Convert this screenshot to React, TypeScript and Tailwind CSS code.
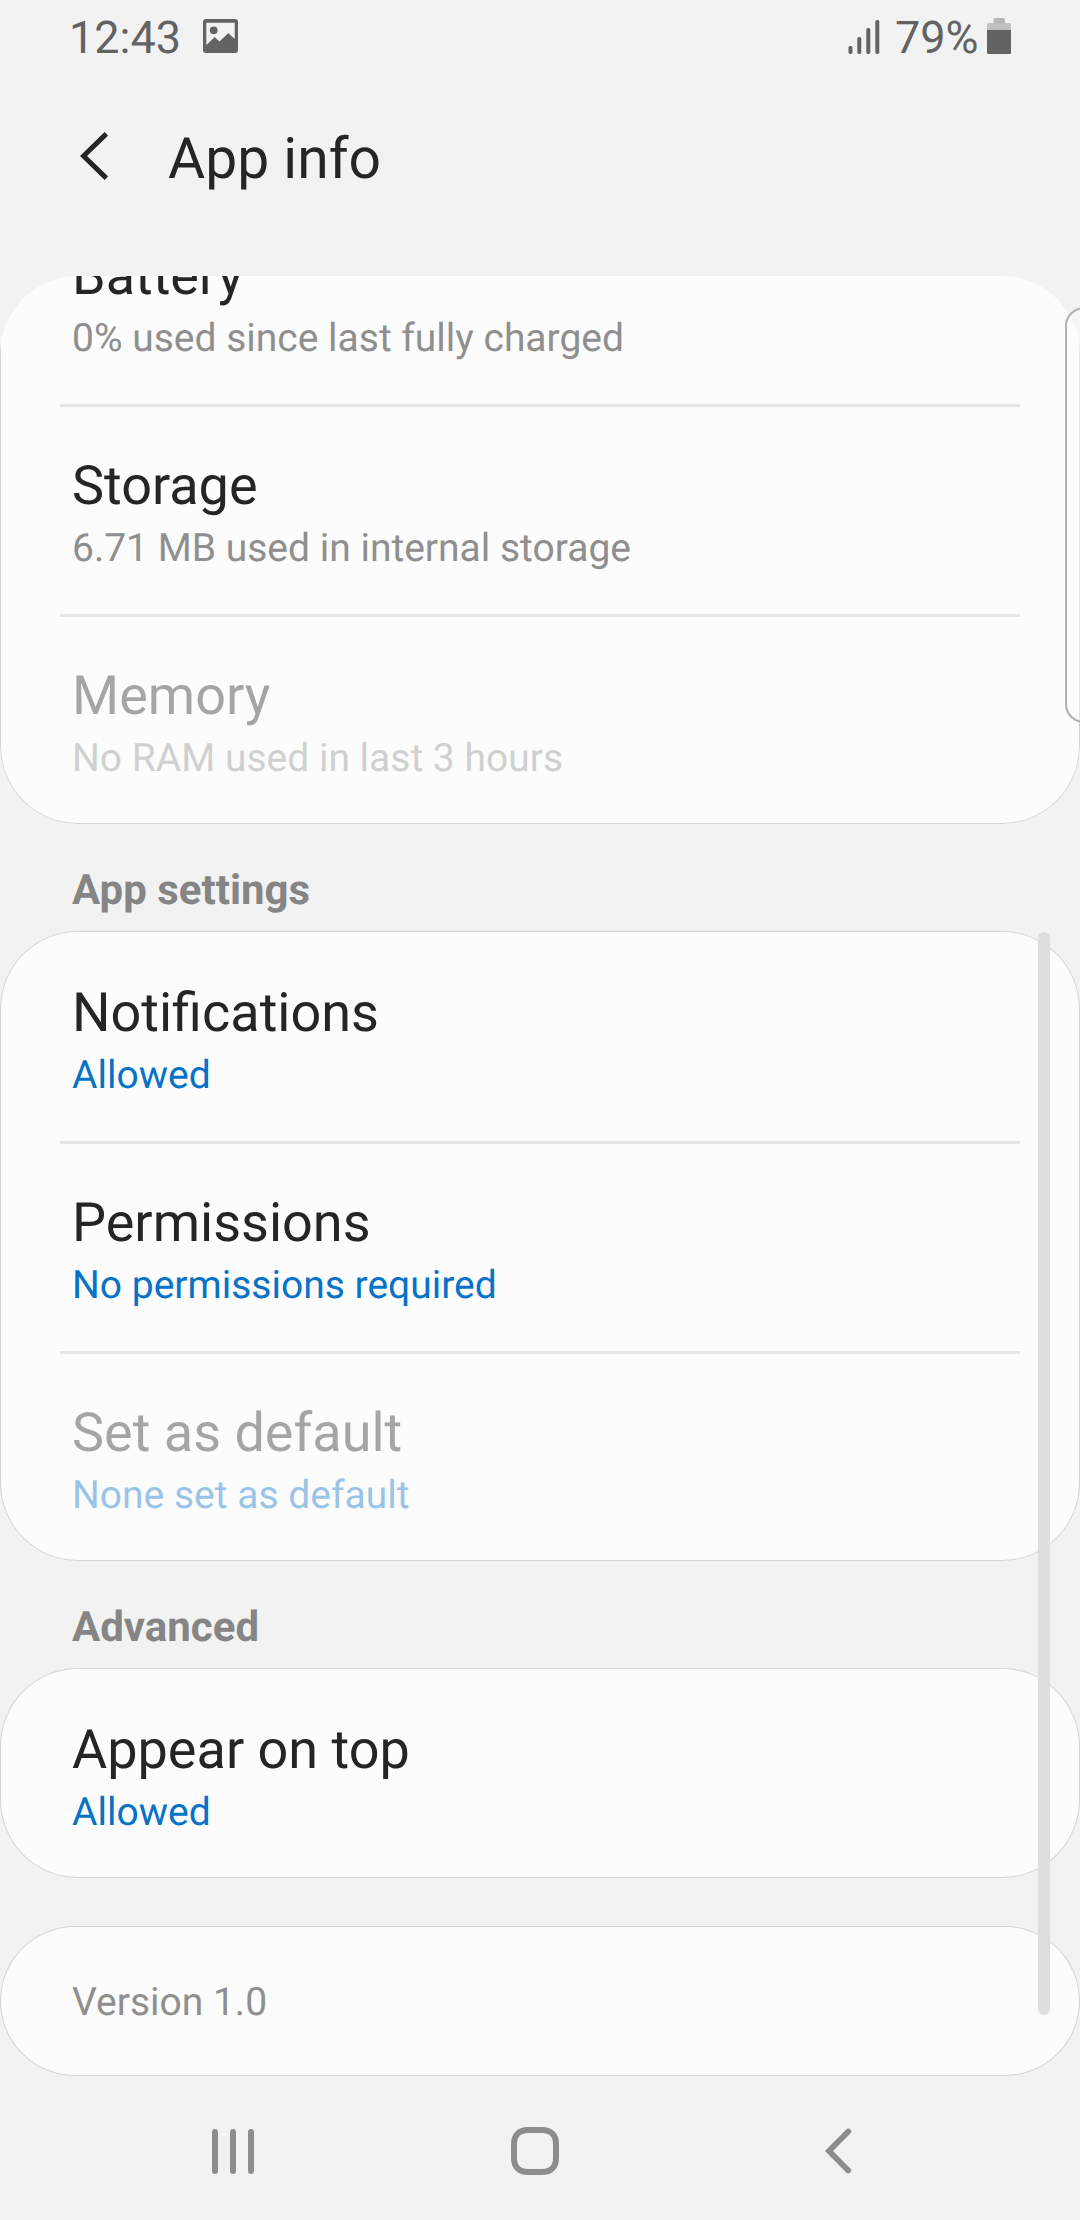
import type { ReactNode } from "react";

type RowProps = { title: string; summary: string; link?: boolean; disabled?: boolean; divided?: boolean };

function Row({ title, summary, link, disabled, divided }: RowProps) {
  const summaryColor = link ? "text-[#0672c8]" : "text-[#8f8f8f]";
  return (
    <div className="flex h-[210px] shrink-0 flex-col">
      <div className={`mx-[60px] h-[3px] shrink-0 ${divided ? "bg-[#e6e6e6]" : ""}`} />
      <div className={`flex flex-col px-[72px] pt-[48px] ${disabled ? "opacity-40" : ""}`}>
        <div className="h-[70px] text-[54px] leading-[63px] text-[#252525]">{title}</div>
        <div className={`h-[46px] text-[39px] leading-[46px] ${summaryColor}`}>{summary}</div>
      </div>
    </div>
  );
}

function Card({ className = "", children }: { className?: string; children: ReactNode }) {
  return (
    <section className={`flex w-full shrink-0 flex-col rounded-[78px] bg-[#fcfcfc] shadow-[inset_0_0_0_1px_#d4d4d4] ${className}`}>
      {children}
    </section>
  );
}

function SectionLabel({ children }: { children: ReactNode }) {
  return (
    <h2 className="h-[107px] shrink-0 px-[72px] pt-[42px] text-[42px] font-bold leading-[49px] text-[#858585]">
      {children}
    </h2>
  );
}

export default function App() {
  return (
    <div className="relative flex h-[2220px] w-[1080px] flex-col overflow-hidden bg-[#f2f2f2] font-['Roboto',sans-serif] [text-rendering:geometricPrecision]">
      <header className="flex h-[72px] shrink-0 items-start pl-[69px] pr-[69px] text-[45px] text-[#636363]">
        <span className="w-[111px] pt-[11px] leading-[53px]">12:43</span>
        <svg className="ml-[23px] mt-[19px] h-[34px] w-[35px]" viewBox="0 0 35 34" fill="#636363">
          <path fillRule="evenodd" d="M3 0H32Q35 0 35 3V31Q35 34 32 34H3Q0 34 0 31V3Q0 0 3 0ZM3.300 3.700V26L11.700 18L16.500 22.500L25.300 14L31.700 20V3.700Z" />
          <circle cx="10.700" cy="11.300" r="3.900" />
        </svg>
        <svg className="ml-auto mt-[20px] h-[34px] w-[32px]" viewBox="0 0 32 34" fill="#636363">
          <rect x="0.500" y="26" width="4" height="8" rx="1.700" />
          <rect x="9.300" y="17" width="4" height="17" rx="1.700" />
          <rect x="18.300" y="8" width="4" height="26" rx="1.700" />
          <rect x="27.300" y="0" width="4" height="34" rx="1.700" />
        </svg>
        <span className="ml-[15px] w-[84px] pt-[11px] leading-[53px]">79%</span>
        <svg className="ml-[8px] mt-[18px] h-[36px] w-[24px]" viewBox="0 0 24 36">
          <path d="M6.500 5V1.500Q6.500 0 8 0H16.500Q18 0 18 1.500V5Z" fill="#b7b7b7" />
          <path d="M0 12V6.500Q0 5 1.500 5H22.500Q24 5 24 6.500V12Z" fill="#c1c1c1" />
          <path d="M0 12H24V34.500Q24 36 22.500 36H1.500Q0 36 0 34.500Z" fill="#636363" />
        </svg>
      </header>

      <div className="flex h-[204px] shrink-0 items-start pl-[80px]">
        <svg className="mt-[60px] h-[48px] w-[28px]" viewBox="0 0 28 48" fill="none" stroke="#252525" strokeWidth="5">
          <path d="M26.300 1.800L3.500 24L26.300 46.200" />
        </svg>
        <h1 className="ml-[60px] mt-[53px] text-[57px] leading-[67px] text-[#252525]">App info</h1>
      </div>

      <main className="flex h-[1800px] shrink-0 flex-col">
        <div className="flex h-[548px] shrink-0 flex-col justify-end overflow-hidden rounded-[78px]">
          <Card>
            <Row title="Battery" summary="0% used since last fully charged" />
            <Row title="Storage" summary="6.71 MB used in internal storage" divided />
            <Row title="Memory" summary="No RAM used in last 3 hours" disabled divided />
          </Card>
        </div>
        <SectionLabel>App settings</SectionLabel>
        <Card>
          <Row title="Notifications" summary="Allowed" link />
          <Row title="Permissions" summary="No permissions required" link divided />
          <Row title="Set as default" summary="None set as default" link disabled divided />
        </Card>
        <SectionLabel>Advanced</SectionLabel>
        <Card>
          <Row title="Appear on top" summary="Allowed" link />
        </Card>
        <Card className="mt-[48px] h-[150px] px-[72px] pt-[53px] text-[39px] leading-[46px] text-[#8f8f8f]">
          Version 1.0
        </Card>
      </main>

      <nav className="flex h-[144px] shrink-0 items-center pl-[212px] pt-[6px]">
        <div className="flex h-[45px] w-[42px] justify-between">
          <div className="w-[6px] rounded-full bg-[#8d8d8d]" />
          <div className="w-[6px] rounded-full bg-[#8d8d8d]" />
          <div className="w-[6px] rounded-full bg-[#8d8d8d]" />
        </div>
        <svg className="ml-[257px] h-[48px] w-[48px]" viewBox="0 0 48 48" fill="none" stroke="#8d8d8d" strokeWidth="6">
          <path d="M17 3H31C40 3 45 8 45 17V31C45 40 40 45 31 45H17C8 45 3 40 3 31V17C3 8 8 3 17 3Z" />
        </svg>
        <svg className="ml-[265px] h-[46px] w-[28px]" viewBox="0 0 28 46" fill="none" stroke="#8d8d8d" strokeWidth="5.800" strokeLinecap="round">
          <path d="M24.300 3.500L5 23L24.300 42.500" />
        </svg>
      </nav>

      <div className="absolute left-[1038px] top-[932px] h-[1083px] w-[12px] rounded-full bg-[#dedede]" />
      <div className="absolute left-[1065px] top-[307px] h-[416px] w-[40px] rounded-[19px] border-2 border-[#b0b0b0] bg-white/40" />
    </div>
  );
}
